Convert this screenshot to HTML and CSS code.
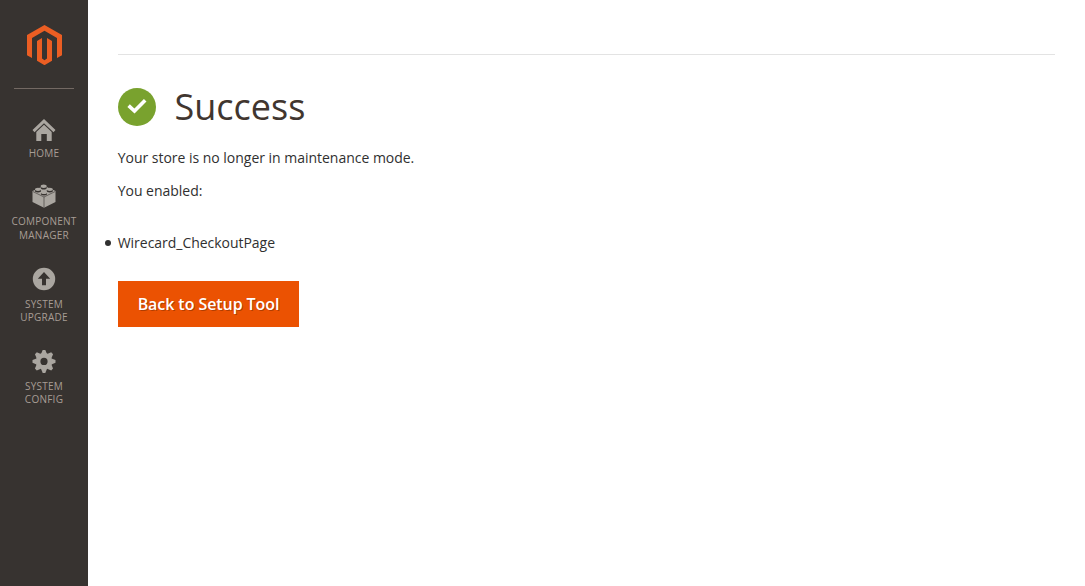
FILE: index.html
```html
<!DOCTYPE html>
<html lang="en">
<head>
<meta charset="utf-8">
<title>Success</title>
<link rel="stylesheet" href="styles.css">
</head>
<body>
<div class="page">
  <nav class="menu">
    <a class="logo" href="#"><svg width="35" height="40" viewBox="0 0 35 40"><path d="M17.500 0 35 10v20.200L30 33V13L17.500 5.800 5 13v20l-5-2.800V10zM15 13v20.600l2.500 1.600 2.500-1.600V13l5 2.900v19.900L17.500 40.200 10 35.800V15.900z"/></svg></a>
    <div class="rule"></div>
    <a class="item home" href="#">
      <svg width="24" height="24" viewBox="0 0 24 24"><path d="M12 1 23.500 12 21.500 14.200 12 5.200 2.500 14.200.5 12zM12 6.800l7.700 7.300V23H14.800v-7H9.300v7H4.300v-8.900z"/></svg>
      <span>HOME</span>
    </a>
    <a class="item" href="#">
      <svg width="24" height="24" viewBox="0 0 24 24"><path d="M.5 7 12 1.800 23.500 7v10.900L12 23.700.5 17.900z"/><path class="cut" d="M1 7.600l11 5.400 11-5.400M12 13v10.500"/><g class="under"><ellipse cx="11.700" cy="3.700" rx="3.100" ry="1.800"/><ellipse cx="6" cy="6.700" rx="3.100" ry="1.700"/><ellipse cx="17.800" cy="6.700" rx="3.100" ry="1.700"/><ellipse cx="12" cy="9.800" rx="3.100" ry="1.700"/></g><g><ellipse cx="11.700" cy="2.300" rx="3" ry="1.700"/><ellipse cx="6" cy="5.300" rx="3" ry="1.600"/><ellipse cx="17.800" cy="5.300" rx="3" ry="1.600"/><ellipse cx="12" cy="8.400" rx="3" ry="1.600"/></g></svg>
      <span>COMPONENT<br>MANAGER</span>
    </a>
    <a class="item" href="#">
      <svg width="24" height="24" viewBox="0 0 24 24"><path fill-rule="evenodd" d="M12 .8a11.200 11.200 0 1 0 0 22.400A11.200 11.200 0 0 0 12 .8zM12 5l6.200 6.700H14v6.500h-4v-6.500H5.800z"/></svg>
      <span>SYSTEM<br>UPGRADE</span>
    </a>
    <a class="item config" href="#">
      <svg width="24" height="24" viewBox="-12 -12.400 24 24"><g><path fill-rule="evenodd" d="M-8.300 0a8.300 8.300 0 1 0 16.600 0a8.300 8.300 0 1 0-16.600 0zM-3.600 0a3.600 3.600 0 1 0 7.200 0a3.600 3.600 0 1 0-7.200 0z"/><path id="tooth" d="M-3-7.400-1.300-11.500H1.300L3-7.400z"/><use href="#tooth" transform="rotate(45)"/><use href="#tooth" transform="rotate(90)"/><use href="#tooth" transform="rotate(135)"/><use href="#tooth" transform="rotate(180)"/><use href="#tooth" transform="rotate(225)"/><use href="#tooth" transform="rotate(270)"/><use href="#tooth" transform="rotate(315)"/></g></svg>
      <span>SYSTEM<br>CONFIG</span>
    </a>
  </nav>
  <main class="content">
    <header class="top"></header>
    <h1 class="title"><svg width="38" height="38" viewBox="0 0 38 38"><circle cx="19" cy="19" r="19"/><path d="M10.600 17.600l5.900 5.500L27.200 12.200"/></svg><span>Success</span></h1>
    <p class="text">Your store is no longer in maintenance mode.</p>
    <p class="text">You enabled:</p>
    <ul class="modules"><li>Wirecard_CheckoutPage</li></ul>
    <button class="primary" type="button">Back to Setup Tool</button>
  </main>
</div>
</body>
</html>
```
FILE: styles.css
```css
* { box-sizing: border-box; }
body { margin: 0; background: #fff; color: #303030; font: 14px/19px "Open Sans", "Noto Sans", sans-serif; }
.page { display: flex; min-height: 586px; }
.menu { width: 88px; flex: none; background: #373330; display: flex; flex-direction: column; align-items: center; padding-top: 25px; }
.logo { display: block; height: 40px; }
.logo svg { display: block; fill: #eb5e23; }
.rule { width: 60px; height: 1px; background: #736963; margin: 23px 0 29px; }
.item { display: flex; flex-direction: column; align-items: center; color: #a79d95; font-size: 10px; line-height: 13.300px; letter-spacing: .25px; text-align: center; text-decoration: none; margin-bottom: 25px; }
.item svg { display: block; fill: #aaa6a0; margin-bottom: 7px; }
.home { margin-bottom: 24px; }
.home svg { margin-bottom: 5px; }
.config { line-height: 13px; }
.item .cut { fill: none; stroke: #373330; stroke-width: .6; }
.under { fill: #373330; }
.content { flex: 1; padding: 0 30px; }
.top { height: 55px; border-bottom: 1px solid #e3e3e3; }
.title { display: flex; align-items: center; gap: 18.500px; height: 38px; margin: 33px 0 22px; color: #41362f; font-size: 36px; line-height: 38px; font-weight: 400; }
.title circle { fill: #79a22e; }
.title path { fill: none; stroke: #fff; stroke-width: 3.600; }
.text { margin: 0 0 14px -.3px; letter-spacing: -.02px; }
.modules { display: flex; margin: 33px 0 29px; padding: 0; list-style: none; letter-spacing: -.03px; }
.modules li { display: flex; align-items: center; gap: 7px; margin-left: -13.300px; }
.modules li::before { content: ""; width: 6px; height: 6px; border-radius: 50%; background: #303030; }
.primary { display: block; width: 181px; height: 46px; padding: 0; border: 0; background: #eb5202; color: #fff; font: 600 16px/46px "Open Sans", "Noto Sans", sans-serif; letter-spacing: -.07px; text-shadow: 1px 1px 0 rgba(0, 0, 0, .25); }
```
